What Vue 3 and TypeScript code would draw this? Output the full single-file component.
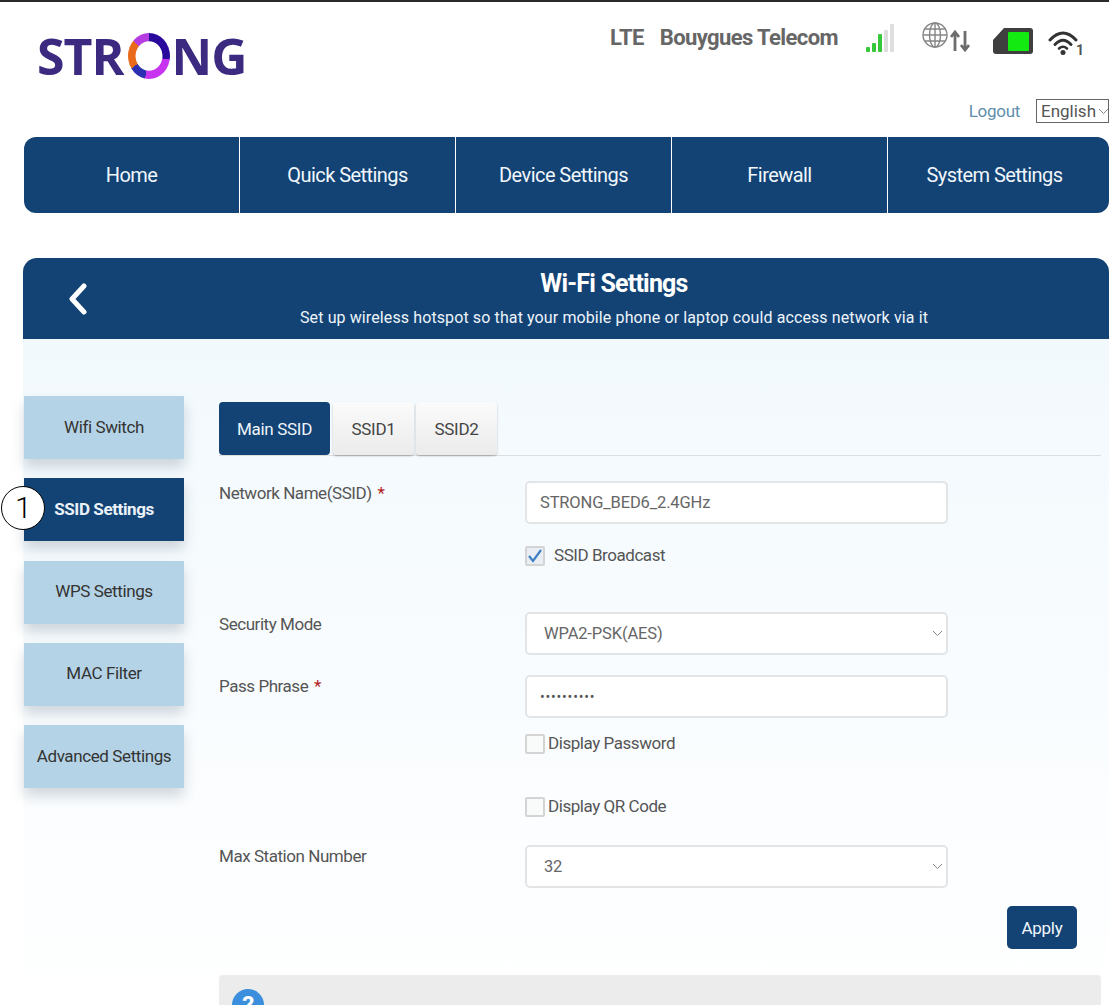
<script setup lang="ts">
const navItems = ['Home', 'Quick Settings', 'Device Settings', 'Firewall', 'System Settings'];
const sideItems = ['Wifi Switch', 'SSID Settings', 'WPS Settings', 'MAC Filter', 'Advanced Settings'];
const tabs = ['Main SSID', 'SSID1', 'SSID2'];
const signalBars = [
  { x: 0, h: 5, on: true },
  { x: 6, h: 9, on: true },
  { x: 12, h: 18, on: true },
  { x: 18, h: 22, on: false },
  { x: 24, h: 28, on: false },
];
</script>

<template>
  <div class="page">
    <header class="top">
      <div class="logo">
        <span>STR</span><span class="logo__o">O</span><span>NG</span>
      </div>
      <div class="status">
        <span class="status__net">LTE</span>
        <span class="status__op">Bouygues Telecom</span>
        <svg class="ic-signal" width="28" height="28" viewBox="0 0 28 28">
          <rect
            v-for="b in signalBars"
            :key="b.x"
            :x="b.x"
            :y="28 - b.h"
            width="4"
            :height="b.h"
            rx="1"
            :fill="b.on ? '#35c93a' : '#dedede'"
          />
        </svg>
        <svg class="ic-globe" width="48" height="30" viewBox="0 0 48 30" fill="none" stroke="#868686" stroke-width="1.400">
          <circle cx="13" cy="13" r="12" />
          <ellipse cx="13" cy="13" rx="5.500" ry="12" />
          <path d="M1 13h24M3 7h20M3 19h20M13 1v24" />
          <path d="M33 29V11M29 15l4-5 4 5M43 9v18M39 23l4 5 4-5" stroke="#6c6c6c" stroke-width="2.800" />
        </svg>
        <svg class="ic-sim" width="42" height="28" viewBox="0 0 42 28">
          <path d="M12 1h26a3 3 0 0 1 3 3v20a3 3 0 0 1-3 3H4a3 3 0 0 1-3-3V13z" fill="#3f3f3f" />
          <rect x="16" y="5" width="21" height="19" rx="1" fill="#12ea12" />
        </svg>
        <svg class="ic-wifi" width="40" height="32" viewBox="0 0 40 32" fill="none" stroke="#333" stroke-linecap="round">
          <path d="M2 12Q15 -2 28 12" stroke-width="3" />
          <path d="M7 16.500Q15 8 23 16.500" stroke-width="3" />
          <path d="M11 20.500Q15 17 19 20.500" stroke-width="2.600" />
          <circle cx="15" cy="24.500" r="2.500" fill="#333" stroke="none" />
          <text x="28" y="27" class="ic-wifi__n">1</text>
        </svg>
      </div>
    </header>

    <div class="account">
      <a class="account__logout">Logout</a>
      <div class="lang">English<svg width="11" height="7" viewBox="0 0 11 7" fill="none" stroke="#888"><path d="M1 1l4.500 4.500L10 1" /></svg></div>
    </div>

    <nav class="nav">
      <div v-for="item in navItems" :key="item" class="nav__item">{{ item }}</div>
    </nav>

    <section class="panel">
      <div class="panel__head">
        <svg class="panel__back" width="20" height="32" viewBox="0 0 20 32" fill="none" stroke="#fff" stroke-width="5" stroke-linecap="round" stroke-linejoin="round">
          <path d="M16 3L4 16l12 13" />
        </svg>
        <h1>Wi-Fi Settings</h1>
        <p>Set up wireless hotspot so that your mobile phone or laptop could access network via it</p>
      </div>

      <div class="panel__body">
        <aside class="side">
          <div
            v-for="(item, i) in sideItems"
            :key="item"
            class="side__item"
            :class="{ 'side__item--on': i === 1 }"
          >
            {{ item }}
            <span v-if="i === 1" class="side__mark">1</span>
          </div>
        </aside>

        <div class="main">
          <div class="tabs">
            <div
              v-for="(t, i) in tabs"
              :key="t"
              class="tabs__tab"
              :class="{ 'tabs__tab--on': i === 0 }"
            >{{ t }}</div>
          </div>

          <div class="row row--ssid">
            <label>Network Name(SSID) <b>*</b></label>
            <div class="field">STRONG_BED6_2.4GHz</div>
          </div>
          <div class="check check--broadcast">
            <span class="check__box check__box--on">
              <svg width="16" height="14" viewBox="0 0 16 14" fill="none" stroke="#3f7fc4" stroke-width="2.200"><path d="M2 7l4 5 8-11" /></svg>
            </span>
            <span class="check__gap">SSID Broadcast</span>
          </div>

          <div class="row row--mode">
            <label>Security Mode</label>
            <div class="field field--select">WPA2-PSK(AES)<svg width="11" height="7" viewBox="0 0 11 7" fill="none" stroke="#888"><path d="M1 1l4.500 4.500L10 1" /></svg></div>
          </div>
          <div class="row row--pass">
            <label>Pass Phrase <b>*</b></label>
            <div class="field field--dots">••••••••••</div>
          </div>
          <div class="check check--pass"><span class="check__box"></span>Display Password</div>
          <div class="check check--qr"><span class="check__box"></span>Display QR Code</div>

          <div class="row row--max">
            <label>Max Station Number</label>
            <div class="field field--select">32<svg width="11" height="7" viewBox="0 0 11 7" fill="none" stroke="#888"><path d="M1 1l4.500 4.500L10 1" /></svg></div>
          </div>

          <div class="actions"><button class="apply">Apply</button></div>

          <div class="help"><span class="help__icon">?</span></div>
        </div>
      </div>
    </section>
  </div>
</template>

<style>
html,
body {
  margin: 0;
  height: 100%;
  overflow: hidden;
  background: #fff;
}
</style>

<style scoped>
.page {
  width: 1109px;
  height: 1005px;
  overflow: hidden;
  border-top: 2px solid #2a2a2a;
  box-sizing: border-box;
  font-family: Roboto, "Liberation Sans", sans-serif;
  color: #555;
}

/* header */
.top {
  display: flex;
  justify-content: space-between;
  height: 94px;
}
.logo {
  margin: 24px 0 0 37px;
  display: flex;
  align-items: center;
  height: 60px;
  font-family: "Open Sans", sans-serif;
  font-weight: 700;
  font-size: 50px;
  line-height: 60px;
  letter-spacing: -1px;
  color: #3b2a80;
}
.logo__o {
  width: 42px;
  height: 46px;
  margin: 0 2px 0 4px;
  border-radius: 50%;
  color: transparent;
  line-height: 34px;
  font-size: 20px;
  text-align: center;
  background:
    radial-gradient(closest-side, #fff 62%, transparent 66%),
    conic-gradient(#2a0a9c 0 100deg, #c733ee 100deg 190deg, #2b2fb0 190deg 235deg, #ea6a1c 235deg 315deg, #b43ce0 315deg 360deg);
}
.status {
  display: flex;
  align-items: flex-start;
  padding: 23px 21px 0 0;
  font-size: 22px;
  font-weight: 700;
  color: #666;
  line-height: 26px;
  letter-spacing: -0.600px;
}
.status__net {
  margin-right: 16px;
}
.status__op {
  margin-right: 28px;
}
.ic-signal {
  margin-top: -1px;
}
.ic-globe {
  margin: -3px 0 0 28px;
}
.ic-sim {
  margin: 2px 0 0 22px;
}
.ic-wifi {
  margin: 3px 0 0 14px;
}
.ic-wifi__n {
  font-size: 14px;
  font-weight: 700;
  letter-spacing: 0;
  fill: #555;
  stroke: none;
}

.account {
  display: flex;
  justify-content: flex-end;
  align-items: center;
  height: 24px;
  margin-top: 3px;
  font-size: 17px;
  gap: 16px;
}
.account__logout {
  color: #5f8fae;
  letter-spacing: -0.300px;
}
.lang {
  display: flex;
  align-items: center;
  gap: 2px;
  width: 73px;
  height: 24px;
  box-sizing: border-box;
  padding-left: 4px;
  border: 1px solid #666;
  color: #555;
  flex: 0 0 auto;
}
.lang svg {
  flex: none;
}

/* nav */
.nav {
  display: flex;
  width: 1085px;
  height: 76px;
  margin: 14px 0 0 24px;
  background: #124374;
  border-radius: 12px;
  overflow: hidden;
}
.nav__item {
  flex: 0 0 216px;
  display: flex;
  align-items: center;
  justify-content: center;
  box-sizing: border-box;
  border-right: 1px solid #fff;
  color: #f0f6fb;
  font-size: 20px;
  letter-spacing: -0.550px;
}
.nav__item:last-child {
  flex: 1;
  border-right: 0;
  padding-right: 8px;
}

/* panel */
.panel {
  margin: 45px 0 0 23px;
}
.panel__head {
  position: relative;
  height: 81px;
  box-sizing: border-box;
  padding: 10px 0 0 96px;
  background: #124374;
  border-radius: 14px 14px 0 0;
  color: #fff;
  text-align: center;
}
.panel__back {
  position: absolute;
  left: 45px;
  top: 25px;
}
.panel__head h1 {
  margin: 0;
  font-size: 25px;
  line-height: 32px;
  font-weight: 700;
  letter-spacing: -0.800px;
}
.panel__head p {
  margin: 8px 0 0;
  font-size: 16px;
  line-height: 20px;
  letter-spacing: 0.110px;
  color: #eef4fa;
}
.panel__body {
  display: flex;
  height: 700px;
  padding-top: 57px;
  box-sizing: border-box;
  background: linear-gradient(#f2f9fd 0, #fdfeff 560px, #fff 100%);
}

/* sidebar */
.side {
  flex: 0 0 160px;
  margin-left: 1px;
  display: flex;
  flex-direction: column;
  gap: 19.250px;
}
.side__item {
  position: relative;
  height: 63px;
  display: flex;
  align-items: center;
  justify-content: center;
  background: #b5d3e6;
  color: #333;
  font-size: 17px;
  letter-spacing: -0.400px;
  padding-bottom: 2px;
  box-sizing: border-box;
  box-shadow: 0 8px 12px rgba(60, 80, 100, 0.22);
}
.side__item--on {
  background: #124374;
  color: #eaf2f8;
  font-weight: 700;
}
.side__mark {
  position: absolute;
  left: -23px;
  top: 8px;
  width: 44px;
  height: 44px;
  box-sizing: border-box;
  border: 1.500px solid #000;
  border-radius: 50%;
  background: #fff;
  color: #000;
  font-size: 30px;
  font-weight: 300;
  line-height: 41px;
  text-align: center;
}

/* main column */
.main {
  width: 882px;
  margin-left: 35px;
  padding-top: 6px;
  font-size: 17px;
  letter-spacing: -0.450px;
}
.tabs {
  display: flex;
  height: 53px;
  border-bottom: 1px solid #ddd;
  gap: 2px;
}
.tabs__tab {
  width: 81px;
  height: 53px;
  display: flex;
  align-items: center;
  justify-content: center;
  background: linear-gradient(#fbfbfb, #ebebeb);
  box-sizing: border-box;
  border-radius: 4px;
  box-shadow: 0 1px 2px rgba(0, 0, 0, 0.28);
  color: #444;
  letter-spacing: -0.300px;
}
.tabs__tab--on {
  width: 111px;
  margin-right: 1px;
  background: #124374;
  box-shadow: none;
  color: #eef4fa;
}

.row {
  display: flex;
  align-items: flex-start;
}
.row label {
  flex: 0 0 306px;
  margin-top: 2px;
  line-height: 20px;
  color: #555;
}
.row label b {
  margin-left: 2px;
  color: #b02020;
  font-weight: 400;
}
.row--ssid {
  margin-top: 25px;
}
.row--mode {
  margin-top: 46px;
}
.row--pass {
  margin-top: 20px;
}
.row--pass label,
.row--max label {
  margin-top: 1px;
}
.row--max {
  margin-top: 28px;
}
.field {
  width: 423px;
  height: 43px;
  box-sizing: border-box;
  display: flex;
  align-items: center;
  justify-content: space-between;
  padding: 0 13px;
  background: #fff;
  border: 2px solid #e2e4e6;
  border-radius: 5px;
  color: #666;
  font-size: 16.500px;
  letter-spacing: -0.150px;
}
.field--select {
  padding: 0 3px 0 17px;
}
.field--dots {
  font-size: 14px;
  letter-spacing: 0.800px;
  color: #555;
}
.check {
  display: flex;
  align-items: flex-start;
  height: 20px;
  margin-left: 306px;
  line-height: 18px;
  color: #555;
}
.check__box {
  flex: 0 0 20px;
  height: 20px;
  margin-right: 3px;
  box-sizing: border-box;
  display: flex;
  align-items: center;
  justify-content: center;
  background: #f9fafa;
  border: 2px solid #d4d4d4;
  border-radius: 2px;
}
.check__box--on {
  background: #e8eef4;
}
.check__gap {
  margin-left: 6px;
}
.check--broadcast {
  margin-top: 22px;
}
.check--pass {
  margin-top: 16px;
}
.check--qr {
  margin-top: 43px;
}
.actions {
  display: flex;
  justify-content: flex-end;
  margin-top: 18px;
  padding-right: 24px;
}
.apply {
  width: 70px;
  height: 43px;
  padding: 0;
  border: 0;
  border-radius: 5px;
  background: #124374;
  color: #f0f6fb;
  font: inherit;
  letter-spacing: -0.300px;
}
.help {
  position: relative;
  height: 120px;
  margin-top: 26px;
  background: #ececec;
  border-radius: 4px;
}
.help__icon {
  position: absolute;
  left: 13px;
  top: 14px;
  width: 32px;
  height: 32px;
  border-radius: 50%;
  background: #3b8fdc;
  color: #fff;
  font-size: 24px;
  font-weight: 700;
  line-height: 32px;
  text-align: center;
}
</style>
